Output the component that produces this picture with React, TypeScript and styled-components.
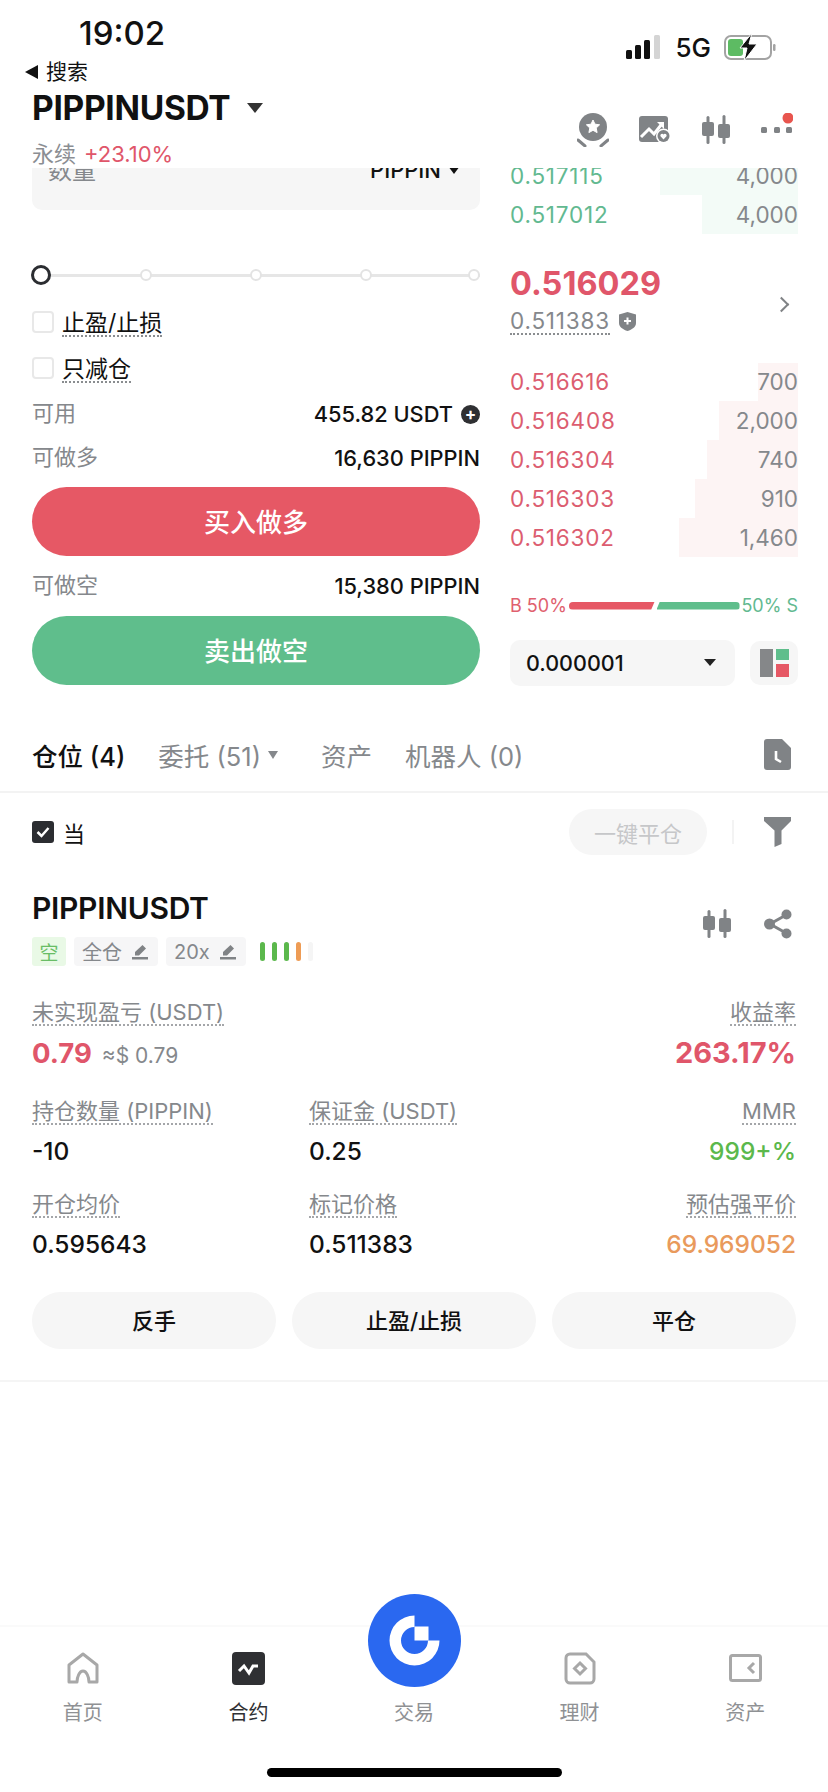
import styled, { createGlobalStyle } from "styled-components";

const GlobalStyles = createGlobalStyle`
  * {
    margin: 0;
    padding: 0;
    box-sizing: border-box;
  }
  body {
    background: #ffffff;
    font-family: Inter, "Noto Sans CJK SC", sans-serif;
  }
`;

const GREY = "#808386";

const asks = [
  { price: "0.517115", qty: "4,000", depth: 138 },
  { price: "0.517012", qty: "4,000", depth: 96 },
];
const bids = [
  { price: "0.516616", qty: "700", depth: 40 },
  { price: "0.516408", qty: "2,000", depth: 79 },
  { price: "0.516304", qty: "740", depth: 91 },
  { price: "0.516303", qty: "910", depth: 103 },
  { price: "0.516302", qty: "1,460", depth: 119 },
];
const navItems = ["首页", "合约", "交易", "理财", "资产"];

function CandleIcon() {
  return (
    <svg width="30" height="30" viewBox="0 0 30 30" fill={GREY}>
      <rect x="5.5" y="1" width="3" height="28" rx="1.5" />
      <rect x="1" y="7" width="12" height="14" rx="2" />
      <rect x="21.5" y="0" width="3" height="29" rx="1.5" />
      <rect x="17" y="9" width="12" height="14" rx="2" />
    </svg>
  );
}

function BadgeIcon() {
  return (
    <svg width="32" height="34" viewBox="0 0 32 34">
      <circle cx="16" cy="14" r="14" fill={GREY} />
      <path
        d="M16 7l2 4.200 4.600.6-3.400 3.200.9 4.600-4.100-2.300-4.100 2.300.9-4.600-3.400-3.200 4.600-.6z"
        fill="#fff"
        stroke="#fff"
        strokeWidth="1"
        strokeLinejoin="round"
      />
      <path d="M1 27l7 6M31 27l-7 6" stroke={GREY} strokeWidth="3" strokeLinecap="round" />
    </svg>
  );
}

function ChartIcon() {
  return (
    <svg width="32" height="28" viewBox="0 0 32 28">
      <rect x="0" y="0" width="29" height="26" rx="3" fill={GREY} />
      <path d="M2 21l8-8 5 5 7-9" fill="none" stroke="#fff" strokeWidth="3" />
      <path d="M18 6h7v7z" fill="#fff" />
      <circle cx="24.5" cy="20" r="7.5" fill="#fff" />
      <circle cx="24.5" cy="20" r="6" fill={GREY} />
      <path d="M24.500 23.500l-3-3.200a1.800 1.800 0 0 1 3-1.900 1.800 1.800 0 0 1 3 1.900z" fill="#fff" />
    </svg>
  );
}

function MoreIcon() {
  return (
    <svg width="32" height="34" viewBox="0 0 32 34" fill={GREY}>
      <rect x="0" y="14" width="6" height="6" rx="1.5" />
      <rect x="13" y="14" width="6" height="6" rx="1.5" />
      <rect x="25" y="14" width="6" height="6" rx="1.5" />
      <circle cx="27" cy="5" r="5.5" fill="#e8554e" />
    </svg>
  );
}

function DocClockIcon() {
  return (
    <svg width="27" height="31" viewBox="0 0 27 31">
      <path d="M3 0h15l9 9v19a3 3 0 0 1-3 3H3a3 3 0 0 1-3-3V3a3 3 0 0 1 3-3z" fill={GREY} />
      <path d="M12 12v8l5 3" fill="none" stroke="#fff" strokeWidth="2.6" />
    </svg>
  );
}

function FilterIcon() {
  return (
    <svg width="27" height="30" viewBox="0 0 27 30">
      <path d="M0 0h27v4l-9.5 9.5V27l-7 3V13.500L0 4z" fill={GREY} />
    </svg>
  );
}

function ShareIcon() {
  return (
    <svg width="28" height="30" viewBox="0 0 28 30" fill={GREY}>
      <path d="M22 6L6 15l16 9" fill="none" stroke={GREY} strokeWidth="3" />
      <circle cx="22.500" cy="5.500" r="5" />
      <circle cx="5.500" cy="15" r="5.500" />
      <circle cx="22.500" cy="24.500" r="5" />
    </svg>
  );
}

function PenIcon() {
  return (
    <svg width="16" height="16" viewBox="0 0 16 16" fill={GREY}>
      <path d="M10.500 1l3.500 3.500-7 7H3v-3.500z" />
      <rect x="0" y="13" width="16" height="2.500" />
    </svg>
  );
}

function ShieldIcon() {
  return (
    <svg width="17" height="19" viewBox="0 0 17 19">
      <path d="M8.500 0L17 2.500V11c0 4-4 6.500-8.500 8C4 17.500 0 15 0 11V2.500z" fill={GREY} />
      <path d="M5 9h7M8.500 5.500v7" stroke="#fff" strokeWidth="2" />
    </svg>
  );
}

function Signal() {
  return (
    <svg width="35" height="24" viewBox="0 0 35 24">
      <rect x="0" y="15" width="6" height="9" rx="1.500" fill="#111" />
      <rect x="9" y="10" width="6" height="14" rx="1.500" fill="#111" />
      <rect x="18" y="5" width="6" height="19" rx="1.500" fill="#111" />
      <rect x="28" y="0" width="6" height="24" rx="1.500" fill="#d4d4d4" />
    </svg>
  );
}

function Battery() {
  return (
    <svg width="52" height="28" viewBox="0 0 52 28">
      <rect x="1" y="3" width="46" height="23" rx="6" fill="none" stroke="#a3a3a3" strokeWidth="2" />
      <rect x="4" y="6" width="15" height="17" rx="3" fill="#5dbb63" />
      <rect x="49" y="11" width="2.500" height="7" rx="1.200" fill="#a3a3a3" />
      <path d="M28 0L16 15h7l-3 13 13-17h-8z" fill="#111" stroke="#fff" strokeWidth="1" />
    </svg>
  );
}

function NavIcon({ index }: { index: number }) {
  if (index === 0)
    return (
      <svg width="32" height="33" viewBox="0 0 32 33">
        <path
          d="M2 30V13L16 2l14 11v17h-8c0-5-2.500-11-6-11s-6 6-6 11z"
          fill="none"
          stroke="#a8a8a8"
          strokeWidth="3"
          strokeLinejoin="round"
        />
      </svg>
    );
  if (index === 1)
    return (
      <svg width="33" height="33" viewBox="0 0 33 33">
        <rect width="33" height="33" rx="4" fill="#2f3033" />
        <path d="M7 19l5-5 5 7 4-7h5" fill="none" stroke="#fff" strokeWidth="3" />
      </svg>
    );
  if (index === 3)
    return (
      <svg width="32" height="33" viewBox="0 0 32 33">
        <path
          d="M6 2h16l8 8v17a4 4 0 0 1-4 4H6a4 4 0 0 1-4-4V6a4 4 0 0 1 4-4z"
          fill="none"
          stroke="#a8a8a8"
          strokeWidth="3"
        />
        <path d="M16 11l5.500 5.500L16 22l-5.500-5.500z" fill="none" stroke="#a8a8a8" strokeWidth="3" />
      </svg>
    );
  return (
    <svg width="33" height="28" viewBox="0 0 33 28">
      <rect x="1.500" y="1.500" width="30" height="25" rx="2" fill="none" stroke="#a8a8a8" strokeWidth="3" />
      <path d="M25 9l-5 5 5 5" fill="none" stroke="#a8a8a8" strokeWidth="3" />
    </svg>
  );
}

function GateLogo() {
  return (
    <svg width="93" height="93" viewBox="0 0 93 93">
      <circle cx="46.500" cy="46.500" r="46.500" fill="#2a68f0" />
      <path
        d="M46.500 21.500A25 25 0 1 0 71.500 46.500H60A13.500 13.500 0 1 1 46.500 33z"
        fill="#fff"
      />
      <rect x="46.500" y="32.500" width="14" height="14" fill="#fff" />
    </svg>
  );
}

function App() {
  return (
    <Page>
      <GlobalStyles />
      <Header>
        <HeaderLeft>
          <Time>19:02</Time>
          <BackLink>
            <BackArrow />
            搜索
          </BackLink>
          <SymbolRow>
            <Symbol>PIPPINUSDT</Symbol>
            <SymbolCaret />
          </SymbolRow>
          <SubRow>
            永续<Change>+23.10%</Change>
          </SubRow>
        </HeaderLeft>
        <HeaderRight>
          <StatusRow>
            <Signal />
            <Network>5G</Network>
            <Battery />
          </StatusRow>
          <Toolbar>
            <BadgeIcon />
            <ChartIcon />
            <CandleIcon />
            <MoreIcon />
          </Toolbar>
        </HeaderRight>
      </Header>

      <TradeArea>
        <FormColumn>
          <AmountBox>
            <AmountLabel>数量</AmountLabel>
            <AmountUnit>
              PIPPIN <SmallCaret />
            </AmountUnit>
          </AmountBox>
          <Slider>
            <SliderHandle />
            <SliderStop $offset={89} />
            <SliderStop $offset={98} />
            <SliderStop $offset={98} />
            <SliderStop $offset={96} />
          </Slider>
          <CheckRow $top={26}>
            <CheckBox />
            <Dotted>止盈/止损</Dotted>
          </CheckRow>
          <CheckRow $top={24}>
            <CheckBox />
            <Dotted>只减仓</Dotted>
          </CheckRow>
          <InfoRow $top={20}>
            <InfoLabel>可用</InfoLabel>
            <InfoValue>
              455.82 USDT <PlusDot>+</PlusDot>
            </InfoValue>
          </InfoRow>
          <InfoRow $top={14}>
            <InfoLabel>可做多</InfoLabel>
            <InfoValue>16,630 PIPPIN</InfoValue>
          </InfoRow>
          <ActionButton $bg="#e65865" $top={14}>买入做多</ActionButton>
          <InfoRow $top={15}>
            <InfoLabel>可做空</InfoLabel>
            <InfoValue>15,380 PIPPIN</InfoValue>
          </InfoRow>
          <ActionButton $bg="#5fbe8c" $top={15}>卖出做空</ActionButton>
        </FormColumn>

        <BookColumn>
          <AskList>
            {asks.map((a) => (
              <BookRow key={a.price}>
                <DepthBar $tone="#f3fbf7" style={{ width: a.depth }} />
                <AskPrice>{a.price}</AskPrice>
                <Qty>{a.qty}</Qty>
              </BookRow>
            ))}
          </AskList>
          <PriceBlock>
            <div>
              <LastPrice>0.516029</LastPrice>
              <MarkRow>
                <MarkPrice>0.511383</MarkPrice>
                <ShieldIcon />
              </MarkRow>
            </div>
            <Chevron />
          </PriceBlock>
          <BidList>
            {bids.map((b) => (
              <BookRow key={b.price}>
                <DepthBar $tone="#fdf4f4" style={{ width: b.depth }} />
                <BidPrice>{b.price}</BidPrice>
                <Qty>{b.qty}</Qty>
              </BookRow>
            ))}
          </BidList>
          <RatioRow>
            <RatioText $color="#e0606e">B 50%</RatioText>
            <RatioBar $side="buy" />
            <RatioBar $side="sell" />
            <RatioText $color="#62b990">50% S</RatioText>
          </RatioRow>
          <BookFooter>
            <PrecisionSelect>
              0.000001
              <SelectCaret />
            </PrecisionSelect>
            <LayoutButton>
              <svg width="29" height="28" viewBox="0 0 29 28">
                <rect x="0" y="0" width="13" height="28" fill="#858789" />
                <rect x="16" y="0" width="13" height="11" fill="#5fbe8c" />
                <rect x="16" y="15" width="13" height="13" fill="#e65865" />
              </svg>
            </LayoutButton>
          </BookFooter>
        </BookColumn>
      </TradeArea>

      <Tabs>
        <TabList>
          <Tab $active>仓位 (4)</Tab>
          <Tab>
            委托 (51)
            <TabCaret />
          </Tab>
          <Tab>资产</Tab>
          <Tab>机器人 (0)</Tab>
        </TabList>
        <DocClockIcon />
      </Tabs>

      <FilterRow>
        <CurrentOnly>
          <CheckedBox>
            <svg width="14" height="12" viewBox="0 0 14 12">
              <path d="M1.500 6l4 4 7-8" fill="none" stroke="#fff" strokeWidth="2.500" />
            </svg>
          </CheckedBox>
          当
        </CurrentOnly>
        <FilterActions>
          <CloseAll>一键平仓</CloseAll>
          <VRule />
          <FilterIcon />
        </FilterActions>
      </FilterRow>

      <PositionHead>
        <div>
          <PositionName>PIPPINUSDT</PositionName>
          <TagRow>
            <SideTag>空</SideTag>
            <Tag>
              全仓 <PenIcon />
            </Tag>
            <Tag>
              20x <PenIcon />
            </Tag>
            <RiskBars>
              <RiskBar $color="#5bb84c" />
              <RiskBar $color="#5bb84c" />
              <RiskBar $color="#5bb84c" />
              <RiskBar $color="#ee9c55" />
              <RiskBar $color="#f5f5f5" />
            </RiskBars>
          </TagRow>
        </div>
        <PositionIcons>
          <CandleIcon />
          <ShareIcon />
        </PositionIcons>
      </PositionHead>

      <StatGrid>
        <Stat>
          <StatLabel>未实现盈亏 (USDT)</StatLabel>
          <PnlLine>
            <BigValue $color="#e0566a" $size={27.5}>0.79</BigValue>
            <ApproxValue>≈$ 0.79</ApproxValue>
          </PnlLine>
        </Stat>
        <Stat />
        <Stat $right>
          <StatLabel>收益率</StatLabel>
          <PnlLine>
            <BigValue $color="#e0566a" $size={29}>263.17%</BigValue>
          </PnlLine>
        </Stat>

        <Stat>
          <StatLabel>持仓数量 (PIPPIN)</StatLabel>
          <StatValue>-10</StatValue>
        </Stat>
        <Stat>
          <StatLabel>保证金 (USDT)</StatLabel>
          <StatValue>0.25</StatValue>
        </Stat>
        <Stat $right>
          <StatLabel>MMR</StatLabel>
          <StatValue $color="#5bb84c">999+%</StatValue>
        </Stat>

        <Stat>
          <StatLabel>开仓均价</StatLabel>
          <StatValue>0.595643</StatValue>
        </Stat>
        <Stat>
          <StatLabel>标记价格</StatLabel>
          <StatValue>0.511383</StatValue>
        </Stat>
        <Stat $right>
          <StatLabel>预估强平价</StatLabel>
          <StatValue $color="#e99a5c">69.969052</StatValue>
        </Stat>
      </StatGrid>

      <PositionActions>
        <PillButton>反手</PillButton>
        <PillButton>止盈/止损</PillButton>
        <PillButton>平仓</PillButton>
      </PositionActions>
      <SectionRule />

      <Spacer />

      <BottomNav>
        <NavRow>
          {navItems.map((label, i) => (
            <NavItem key={label} $active={i === 1}>
              <NavIconBox>
                {i === 2 ? (
                  <RaisedLogo>
                    <GateLogo />
                  </RaisedLogo>
                ) : (
                  <NavIcon index={i} />
                )}
              </NavIconBox>
              {label}
            </NavItem>
          ))}
        </NavRow>
        <HomeIndicator />
      </BottomNav>
    </Page>
  );
}

export default App;

const Page = styled.div`
  width: 828px;
  height: 1792px;
  display: flex;
  flex-direction: column;
  overflow: hidden;
  background: #ffffff;
  color: #111111;
`;

const Header = styled.header`
  height: 168px;
  flex: none;
  display: flex;
  justify-content: space-between;
  overflow: hidden;
`;
const HeaderLeft = styled.div`
  padding: 14px 0 0 32px;
`;
const Time = styled.div`
  font-size: 33px;
  font-weight: 500;
  line-height: 38px;
  margin-left: 47px;
`;
const BackLink = styled.div`
  display: flex;
  align-items: center;
  gap: 8px;
  margin: 7px 0 0 -7px;
  font-size: 21px;
  line-height: 26px;
`;
const BackArrow = styled.span`
  width: 0;
  height: 0;
  border-top: 7px solid transparent;
  border-bottom: 7px solid transparent;
  border-right: 13px solid #111111;
`;
const SymbolRow = styled.div`
  display: flex;
  align-items: center;
  gap: 17px;
  margin-top: 5px;
`;
const Symbol = styled.h1`
  font-size: 33.500px;
  font-weight: 700;
  line-height: 36px;
  letter-spacing: -0.3px;
`;
const SymbolCaret = styled.span`
  width: 0;
  height: 0;
  border-left: 8px solid transparent;
  border-right: 8px solid transparent;
  border-top: 10px solid #333333;
`;
const SubRow = styled.div`
  margin-top: 14px;
  font-size: 22px;
  line-height: 28px;
  color: #8b8e93;
`;
const Change = styled.span`
  margin-left: 8px;
  color: #e0566a;
`;
const HeaderRight = styled.div`
  display: flex;
  flex-direction: column;
  align-items: flex-end;
  padding: 33px 35px 0 0;
`;
const StatusRow = styled.div`
  display: flex;
  align-items: center;
  gap: 14px;
  height: 28px;
  margin-right: 17px;
`;
const Network = styled.span`
  font-size: 26px;
  font-weight: 500;
  margin-right: -1px;
`;
const Toolbar = styled.div`
  display: flex;
  align-items: center;
  gap: 30px;
  height: 34px;
  margin-top: 52px;
`;

const TradeArea = styled.section`
  height: 532px;
  flex: none;
  display: flex;
  justify-content: space-between;
  padding: 0 30px 0 32px;
  overflow: hidden;
`;
const FormColumn = styled.div`
  width: 448px;
`;
const AmountBox = styled.div`
  height: 42px;
  display: flex;
  justify-content: space-between;
  padding: 0 20px 0 16px;
  background: #f6f6f6;
  border-radius: 0 0 10px 10px;
  overflow: hidden;
`;
const AmountLabel = styled.span`
  margin-top: -14px;
  font-size: 24px;
  line-height: 34px;
  color: #85888c;
`;
const AmountUnit = styled.span`
  display: flex;
  align-items: center;
  gap: 7px;
  height: 24px;
  margin-top: -10px;
  font-size: 22px;
  font-weight: 500;
`;
const SmallCaret = styled.i`
  width: 0;
  height: 0;
  border-left: 6px solid transparent;
  border-right: 6px solid transparent;
  border-top: 8px solid #111111;
`;
const Slider = styled.div`
  height: 20px;
  margin: 55px 0 0 -1px;
  display: flex;
  align-items: center;
  background: linear-gradient(#e6e6e6, #e6e6e6) center / 100% 3px no-repeat;
`;
const SliderHandle = styled.span`
  width: 20px;
  height: 20px;
  flex: none;
  border: 3px solid #2b2d31;
  border-radius: 50%;
  background: #ffffff;
`;
const SliderStop = styled.span<{ $offset: number }>`
  width: 12px;
  height: 12px;
  flex: none;
  margin-left: ${(p) => p.$offset}px;
  border: 2px solid #e3e3e3;
  border-radius: 50%;
  background: #ffffff;
`;
const CheckRow = styled.label<{ $top: number }>`
  display: flex;
  align-items: center;
  gap: 8px;
  height: 22px;
  margin-top: ${(p) => p.$top}px;
  font-size: 23px;
`;
const CheckBox = styled.span`
  width: 22px;
  height: 22px;
  flex: none;
  border: 2px solid #e8e8e8;
  border-radius: 4px;
`;
const Dotted = styled.span`
  margin-top: 4px;
  border-bottom: 2px dotted #8a8d90;
  line-height: 24px;
`;
const InfoRow = styled.div<{ $top: number }>`
  display: flex;
  justify-content: space-between;
  align-items: center;
  height: 30px;
  margin-top: ${(p) => p.$top}px;
  font-size: 22px;
  color: #85888c;
`;
const InfoLabel = styled.span`
  margin-bottom: 6px;
`;
const InfoValue = styled.span`
  display: flex;
  align-items: center;
  gap: 8px;
  font-size: 21.800px;
  font-weight: 500;
  color: #111111;
`;
const PlusDot = styled.span`
  width: 19px;
  height: 19px;
  border-radius: 50%;
  background: #2f3033;
  color: #ffffff;
  font-size: 17px;
  font-weight: 700;
  line-height: 18px;
  text-align: center;
`;
const ActionButton = styled.button<{ $bg: string; $top: number }>`
  display: block;
  width: 100%;
  height: 69px;
  margin-top: ${(p) => p.$top}px;
  padding-bottom: 3px;
  border: 0;
  border-radius: 35px;
  background: ${(p) => p.$bg};
  color: #ffffff;
  font-family: inherit;
  font-size: 26px;
  font-weight: 500;
`;

const BookColumn = styled.div`
  width: 288px;
`;
const AskList = styled.div`
  margin-top: -12px;
`;
const BookRow = styled.div`
  position: relative;
  height: 38.8px;
  display: flex;
  justify-content: space-between;
  align-items: center;
  font-size: 22.500px;
`;
const DepthBar = styled.span<{ $tone: string }>`
  position: absolute;
  top: 0;
  right: 0;
  bottom: 0;
  background: ${(p) => p.$tone};
`;
const AskPrice = styled.span`
  position: relative;
  letter-spacing: 0.8px;
  color: #62b990;
`;
const BidPrice = styled.span`
  position: relative;
  letter-spacing: 0.8px;
  color: #dc5d70;
`;
const Qty = styled.span`
  position: relative;
  color: #85888c;
`;
const PriceBlock = styled.div`
  display: flex;
  justify-content: space-between;
  align-items: center;
  margin-top: 31px;
  padding-right: 8px;
`;
const LastPrice = styled.div`
  font-size: 32.500px;
  font-weight: 700;
  line-height: 38px;
  color: #e0566a;
`;
const MarkRow = styled.div`
  display: flex;
  align-items: center;
  gap: 9px;
  margin-top: 5px;
`;
const MarkPrice = styled.span`
  border-bottom: 2px dotted #8a8d90;
  font-size: 22.500px;
  letter-spacing: 0.8px;
  line-height: 25px;
  color: #85888c;
`;
const Chevron = styled.span`
  width: 11px;
  height: 11px;
  margin: 10px 3px 0 0;
  border-top: 2px solid #808386;
  border-right: 2px solid #808386;
  transform: rotate(45deg);
`;
const BidList = styled.div`
  margin-top: 28px;
`;
const RatioRow = styled.div`
  display: flex;
  align-items: center;
  justify-content: space-between;
  height: 26px;
  margin-top: 36px;
`;
const RatioText = styled.span<{ $color: string }>`
  font-size: 18px;
  color: ${(p) => p.$color};
`;
const RatioBar = styled.span<{ $side: "buy" | "sell" }>`
  flex: none;
  width: ${(p) => (p.$side === "buy" ? 86 : 83)}px;
  height: 8px;
  border-radius: ${(p) => (p.$side === "buy" ? "4px 0 0 4px" : "0 4px 4px 0")};
  background: ${(p) => (p.$side === "buy" ? "#e65865" : "#5fbe8c")};
  clip-path: ${(p) =>
    p.$side === "buy"
      ? "polygon(0 0, 100% 0, 96% 100%, 0 100%)"
      : "polygon(4% 0, 100% 0, 100% 100%, 0 100%)"};
`;
const BookFooter = styled.div`
  display: flex;
  justify-content: space-between;
  align-items: center;
  margin-top: 21px;
`;
const PrecisionSelect = styled.div`
  width: 225px;
  height: 46px;
  display: flex;
  align-items: center;
  justify-content: space-between;
  padding: 0 19px 0 16px;
  border-radius: 10px;
  background: #f6f6f6;
  font-size: 21.500px;
  font-weight: 500;
`;
const SelectCaret = styled.i`
  width: 0;
  height: 0;
  border-left: 6.500px solid transparent;
  border-right: 6.500px solid transparent;
  border-top: 7px solid #222222;
`;
const LayoutButton = styled.div`
  width: 48px;
  height: 44px;
  display: flex;
  align-items: center;
  justify-content: center;
  border-radius: 10px;
  background: #f6f6f6;
`;

const Tabs = styled.nav`
  height: 93px;
  flex: none;
  display: flex;
  justify-content: space-between;
  align-items: center;
  padding: 18px 37px 0 32px;
  border-bottom: 2px solid #f3f3f3;
`;
const TabList = styled.div`
  display: flex;
  gap: 33px;
`;
const Tab = styled.span<{ $active?: boolean }>`
  display: flex;
  align-items: center;
  font-size: 25.500px;
  font-weight: ${(p) => (p.$active ? 500 : 400)};
  color: ${(p) => (p.$active ? "#111111" : "#85888c")};
`;
const TabCaret = styled.i`
  width: 0;
  height: 0;
  margin: 0 10px 0 7px;
  border-left: 5.500px solid transparent;
  border-right: 5.500px solid transparent;
  border-top: 8px solid #85888c;
`;
const FilterRow = styled.div`
  display: flex;
  justify-content: space-between;
  align-items: center;
  height: 46px;
  flex: none;
  margin-top: 16px;
  padding: 0 37px 0 32px;
`;
const CurrentOnly = styled.div`
  display: flex;
  align-items: center;
  gap: 9px;
  font-size: 22px;
`;
const CheckedBox = styled.span`
  width: 22px;
  height: 22px;
  display: flex;
  align-items: center;
  justify-content: center;
  border-radius: 3px;
  background: #2b2d31;
`;
const FilterActions = styled.div`
  display: flex;
  align-items: center;
`;
const CloseAll = styled.span`
  width: 138px;
  height: 46px;
  display: flex;
  align-items: center;
  justify-content: center;
  border-radius: 23px;
  background: #f6f6f6;
  color: #c6c7c9;
  font-size: 22px;
`;
const VRule = styled.span`
  width: 2px;
  height: 24px;
  margin: 0 30px 0 25px;
  background: #f3f3f3;
`;
const PositionHead = styled.div`
  display: flex;
  justify-content: space-between;
  flex: none;
  margin-top: 37px;
  padding: 0 36px 0 32px;
`;
const PositionName = styled.div`
  font-size: 30px;
  font-weight: 600;
  line-height: 32px;
  letter-spacing: -0.3px;
`;
const TagRow = styled.div`
  display: flex;
  align-items: center;
  gap: 8px;
  margin-top: 13px;
`;
const SideTag = styled.span`
  width: 34px;
  height: 29px;
  display: flex;
  align-items: center;
  justify-content: center;
  border-radius: 3px;
  background: #e9f9e6;
  color: #68bd65;
  font-size: 19px;
`;
const Tag = styled.span`
  height: 29px;
  display: flex;
  align-items: center;
  gap: 10px;
  padding: 0 10px 0 8px;
  border-radius: 4px;
  background: #f6f6f7;
  color: #85888c;
  font-size: 20px;
`;
const RiskBars = styled.span`
  display: flex;
  gap: 7px;
  margin-left: 6px;
`;
const RiskBar = styled.i<{ $color: string }>`
  width: 5px;
  height: 19px;
  border-radius: 3px;
  background: ${(p) => p.$color};
`;
const PositionIcons = styled.div`
  display: flex;
  gap: 32px;
  padding-top: 17px;
`;
const StatGrid = styled.div`
  display: grid;
  grid-template-columns: 277px 1fr auto;
  grid-template-rows: 99px 93px 71px;
  flex: none;
  margin-top: 34px;
  padding: 0 32px;
`;
const Stat = styled.div<{ $right?: boolean }>`
  display: flex;
  flex-direction: column;
  align-items: ${(p) => (p.$right ? "flex-end" : "flex-start")};
`;
const StatLabel = styled.span`
  height: 26px;
  border-bottom: 2px dotted #a4a6a9;
  font-size: 22px;
  line-height: 25px;
  color: #85888c;
`;
const StatValue = styled.span<{ $color?: string }>`
  margin-top: 8px;
  font-size: 24.500px;
  line-height: 36px;
  font-weight: 500;
  color: ${(p) => p.$color ?? "#111111"};
`;
const PnlLine = styled.div`
  display: flex;
  align-items: baseline;
  gap: 10px;
  margin-top: 8px;
`;
const BigValue = styled.span<{ $color: string; $size: number }>`
  font-size: ${(p) => p.$size}px;
  font-weight: 700;
  line-height: 38px;
  color: ${(p) => p.$color};
`;
const ApproxValue = styled.span`
  font-size: 21px;
  color: #85888c;
`;
const PositionActions = styled.div`
  display: grid;
  grid-template-columns: repeat(3, 1fr);
  gap: 16px;
  flex: none;
  margin-top: 29px;
  padding: 0 32px;
`;
const PillButton = styled.button`
  height: 57px;
  padding-bottom: 4px;
  border: 0;
  border-radius: 29px;
  background: #f6f6f6;
  color: #111111;
  font-family: inherit;
  font-size: 22px;
  font-weight: 500;
`;
const SectionRule = styled.div`
  flex: none;
  height: 2px;
  margin-top: 31px;
  background: #f5f5f5;
`;
const Spacer = styled.div`
  flex: 1;
`;
const BottomNav = styled.footer`
  flex: none;
  height: 167px;
  display: flex;
  flex-direction: column;
  border-top: 2px solid #fafafa;
`;
const NavRow = styled.div`
  display: grid;
  grid-template-columns: repeat(5, 1fr);
  height: 97px;
`;
const NavItem = styled.div<{ $active?: boolean }>`
  display: flex;
  flex-direction: column;
  align-items: center;
  padding-top: 24px;
  font-size: 20px;
  line-height: 26px;
  color: ${(p) => (p.$active ? "#2f3033" : "#8f9194")};
`;
const NavIconBox = styled.div`
  position: relative;
  height: 34px;
  margin-bottom: 15px;
  display: flex;
  align-items: center;
  justify-content: center;
`;
const RaisedLogo = styled.div`
  position: absolute;
  left: -46px;
  top: -57px;
  line-height: 0;
`;
const HomeIndicator = styled.div`
  align-self: center;
  width: 295px;
  height: 9px;
  margin-top: 44px;
  border-radius: 5px;
  background: #000000;
`;
